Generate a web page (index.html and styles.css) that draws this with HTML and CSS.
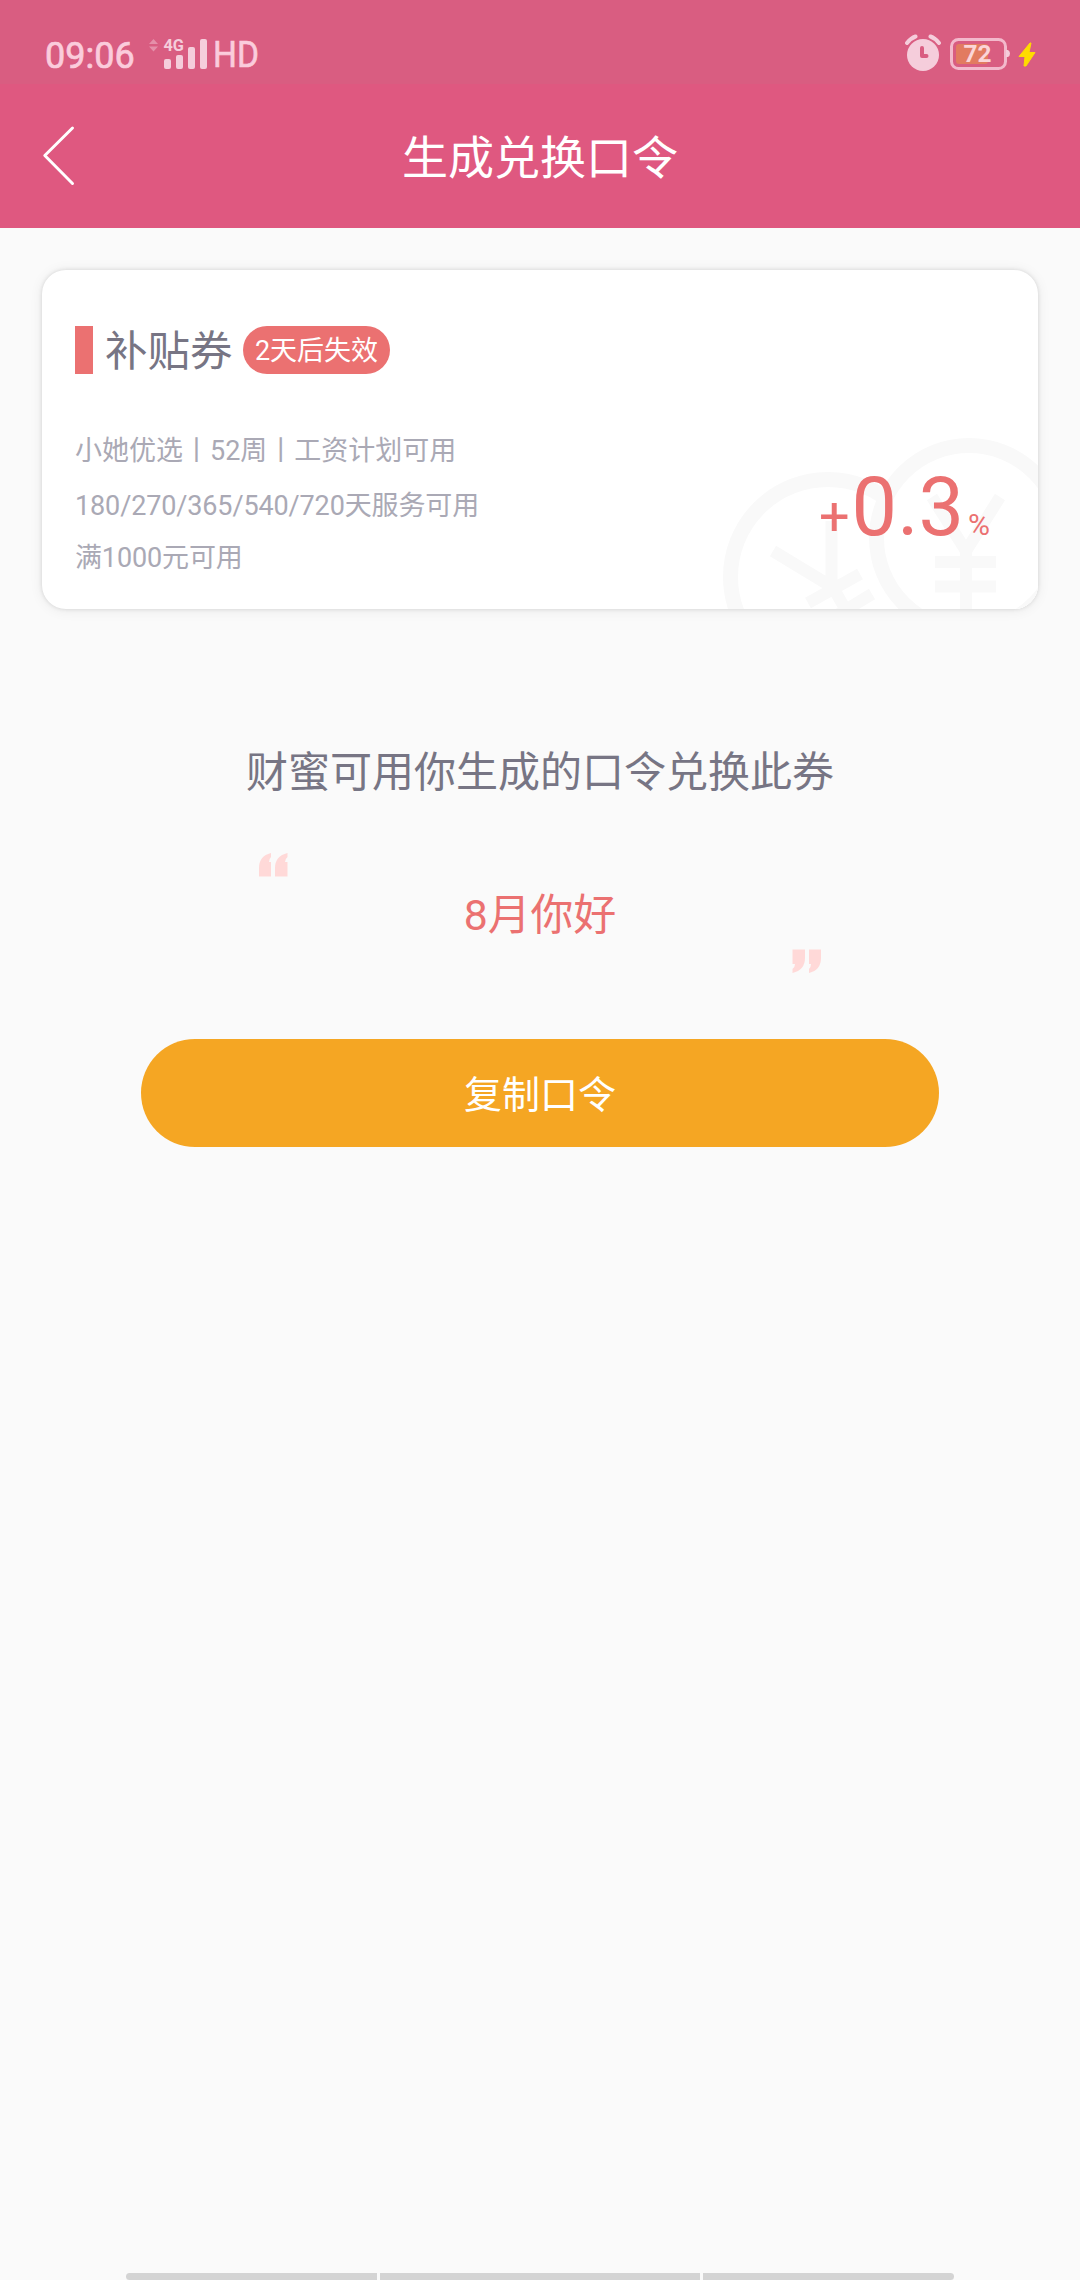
FILE: index.html
```html
<!DOCTYPE html>
<html lang="zh-CN">
<head>
<meta charset="utf-8">
<title>生成兑换口令</title>
<link rel="stylesheet" href="styles.css">
</head>
<body>
<div class="screen">
  <div class="status">
    <span class="clock">09:06</span>
    <svg class="signal" width="112" height="40" viewBox="148 34 112 40">
      <path class="data" d="M149 44l4.500-5 4.500 5zM149 46.500h9l-4.500 5z"/>
      <g class="soft">
        <rect x="164" y="59" width="7" height="10" rx="2"/>
        <rect x="176" y="55" width="7" height="14" rx="2"/>
        <rect x="188" y="47" width="7" height="22" rx="2"/>
        <rect x="200" y="39" width="7" height="30" rx="2"/>
        <text class="net" x="163.500" y="51" textLength="20.500" lengthAdjust="spacingAndGlyphs">4G</text>
        <text class="hd" x="213" y="67" textLength="46" lengthAdjust="spacingAndGlyphs">HD</text>
      </g>
    </svg>
    <svg class="power" width="134" height="40" viewBox="904 34 134 40">
      <circle class="soft" cx="923" cy="55" r="16"/>
      <path class="arm" d="M907 43q4-5 8.500-6.500M939 43q-4-5-8.500-6.500"/>
      <path class="hands" d="M922 48v8h4.500"/>
      <rect class="level" x="956" y="44" width="32" height="20" rx="3"/>
      <rect class="case" x="951.500" y="39.500" width="54" height="29" rx="7"/>
      <path class="soft" d="M1006 50h2q2 1 2 3.500t-2 3.500h-2z"/>
      <text class="percent" x="963.500" y="62" textLength="28" lengthAdjust="spacingAndGlyphs">72</text>
      <path class="bolt" d="M1030 43L1019 56.500h6L1024 66h2L1035 52.500h-6L1031 43z"/>
    </svg>
  </div>
  <header class="nav">
    <svg class="back" width="34" height="62" viewBox="42 125 34 62"><path d="M72.500 128L44.800 155.500L72.500 183.500"/></svg>
    <h1>生成兑换口令</h1>
  </header>
  <main>
    <section class="card">
      <svg class="coins" width="320" height="178" viewBox="718 430 320 178">
        <circle cx="828" cy="576" r="97.500"/>
        <path class="yen" d="M773 550L834 587M831.500 520V584L850 616M808 602L860 573M834 616L872 593"/>
        <circle class="front" cx="969" cy="537" r="92.500"/>
        <path class="yen" d="M932 496L966 550L1000 496M966 548V610M935 561H996M935 585.500H996"/>
      </svg>
      <div class="head">
        <i class="mark"></i>
        <h2>补贴券</h2>
        <span class="badge">2天后失效</span>
      </div>
      <div class="body">
        <div class="terms">
          <p>小她优选丨52周丨工资计划可用</p>
          <p class="tight">180/270/365/540/720天服务可用</p>
          <p class="tight last">满1000元可用</p>
        </div>
        <div class="rate"><span class="plus">+</span><span class="num">0.3</span><span class="unit">%</span></div>
      </div>
    </section>
    <p class="tip">财蜜可用你生成的口令兑换此券</p>
    <div class="quote">
      <svg class="open" width="29" height="24" viewBox="0 0 29 24"><path d="M0 23.500V15Q0 3 12 0V4Q10 6 10 9H12V23.500zM16 23.500V15Q16 3 28.500 0V4Q26 6 26 9H28.500V23.500z"/></svg>
      <p>8月你好</p>
      <svg class="close" width="29" height="24" viewBox="0 0 29 24"><path d="M0 23.500V15Q0 3 12 0V4Q10 6 10 9H12V23.500zM16 23.500V15Q16 3 28.500 0V4Q26 6 26 9H28.500V23.500z"/></svg>
    </div>
    <button class="copy">复制口令</button>
  </main>
  <footer class="gesture"><i></i><i></i><i></i></footer>
</div>
</body>
</html>
```
FILE: styles.css
```css
* { box-sizing: border-box; margin: 0; padding: 0; }
body { font-family: Roboto, "Noto Sans CJK SC", sans-serif; background: #fafafa; }
.screen { width: 1080px; height: 2280px; display: flex; flex-direction: column; overflow: hidden; }
h1, h2 { font-weight: 400; }
svg { display: block; flex: none; }

.status { height: 84px; padding: 34px 42px 0 45px; display: flex; align-items: flex-start; background: #d95d81; }
.clock { width: 103px; padding-top: 1px; font-size: 36px; line-height: 42px; color: #fbccdc; -webkit-text-stroke: .7px #fbccdc; }
.signal { overflow: visible; }
.power { margin-left: auto; }
.soft { fill: #f5cddb; }
.data { fill: #e58fa9; }
.net { font-size: 17px; font-weight: 700; }
.hd { font-size: 36px; fill: #fbccdc; stroke: #fbccdc; stroke-width: .6px; }
.arm { fill: none; stroke: #f5cddb; stroke-width: 4; stroke-linecap: round; }
.hands { fill: none; stroke: #d95d81; stroke-width: 4; stroke-linecap: round; stroke-linejoin: round; }
.level { fill: #e27b60; }
.case { fill: none; stroke: #f3b9cc; stroke-width: 3; }
.percent { font-size: 24px; font-weight: 700; fill: #fbd5d8; }
.bolt { fill: #ffdc00; stroke: #ffdc00; stroke-width: 1; stroke-linejoin: round; }

.nav { height: 144px; padding: 0 42px; display: grid; grid-template-columns: 34px 1fr 34px; align-items: center; background: #df5880; }
.back path { fill: none; stroke: #fff; stroke-width: 3; stroke-linecap: round; stroke-linejoin: round; }
.nav h1 { padding-top: 4px; font-size: 46px; line-height: 60px; text-align: center; color: #fff; }

main { flex: 1; padding: 42px 42px 0; display: flex; flex-direction: column; align-items: center; }
.card { position: relative; width: 996px; height: 339px; padding: 56px 33px 0; border-radius: 24px; background: #fff; box-shadow: 0 0 4px rgba(0,0,0,.13), 0 1px 14px rgba(0,0,0,.07); }
.coins { position: absolute; right: 0; bottom: 0; border-bottom-right-radius: 24px; }
.coins circle { fill: none; stroke: #f9f9f9; stroke-width: 15; }
.coins .front { fill: #fff; }
.yen { fill: none; stroke: #f9f9f9; stroke-width: 12; }
.head { position: relative; height: 48px; display: flex; align-items: center; }
.mark { width: 18px; height: 48px; background: #eb7171; }
.head h2 { margin-left: 12px; padding-top: 4px; width: 138px; font-size: 42.5px; line-height: 48px; white-space: nowrap; color: #777584; }
.badge { width: 147px; height: 48px; padding-top: 1px; border-radius: 24px; background: #eb7171; color: #fff; font-size: 27px; line-height: 48px; text-align: center; }
.body { position: relative; display: flex; justify-content: space-between; margin-top: 50px; }
.terms { font-size: 27px; line-height: 54px; color: #aaa9b5; }
.terms .tight { padding-top: 1px; letter-spacing: -.13px; }
.terms .last { padding-top: 0; margin-top: -2px; }
.rate { display: flex; align-items: baseline; padding: 37px 15px 0 0; line-height: 94px; color: #eb7171; }
.plus { font-size: 54px; }
.num { font-size: 81px; margin-left: 2px; }
.unit { font-size: 30px; margin-left: 4px; }

.tip { margin-top: 134px; font-size: 42px; line-height: 60px; color: #777584; }
.quote { width: 563px; height: 120px; margin-top: 50px; display: flex; justify-content: space-between; align-items: center; color: #eb7171; font-size: 42.8px; line-height: 60px; }
.quote p { padding-top: 3px; }
.quote path { fill: #ffd9d8; }
.open { align-self: flex-start; }
.close { align-self: flex-end; transform: rotate(180deg); }
.copy { width: 798px; height: 108px; margin-top: 66px; padding-bottom: 4px; border: 0; border-radius: 54px; background: #f5a623; color: #fff; font: inherit; font-size: 38px; }

.gesture { height: 7px; margin: 0 126px; display: grid; grid-template-columns: 251px 320px 251px; gap: 3px; }
.gesture i { background: #d4d4d4; }
.gesture i:first-child { border-radius: 5px 0 0 5px; }
.gesture i:last-child { border-radius: 0 5px 5px 0; }
```
